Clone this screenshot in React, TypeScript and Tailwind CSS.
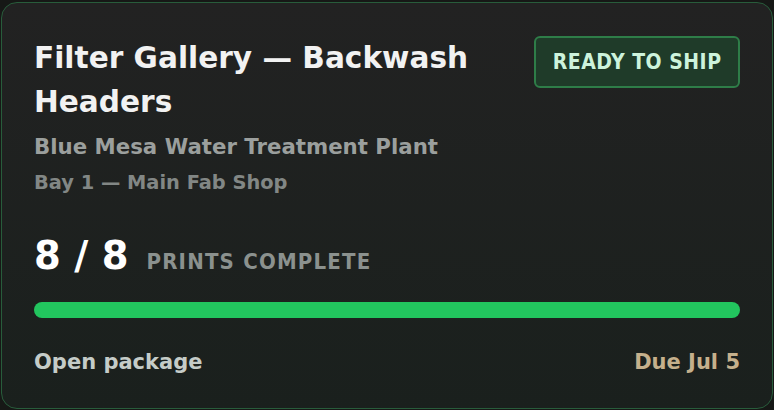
export default function App() {
  return (
    <div
      className="h-[410px] w-[774px] bg-[#161816] px-[1px] pt-[2px] pb-[1px]"
      style={{ fontFamily: '"DejaVu Sans", sans-serif' }}
    >
      <div className="flex h-full flex-col rounded-[16px] border border-[#285c3b] bg-gradient-to-b from-[#222222] to-[#1a201d] pt-[33px] pr-[32px] pb-[31px] pl-[32px]">
        <div className="flex items-start justify-between gap-6">
          <div className="flex flex-col">
            <h1 className="text-[29.6px] leading-[44px] font-bold text-[#f2f2f2]">
              Filter Gallery — Backwash
              <br />
              Headers
            </h1>
            <div className="mt-[8px] text-[21.3px] leading-[30px] font-bold text-[#9b9f9d]">
              Blue Mesa Water Treatment Plant
            </div>
            <div className="mt-[8px] text-[19.4px] leading-[26px] font-bold text-[#828785]">
              Bay 1 — Main Fab Shop
            </div>
          </div>
          <div
            className="rounded-[6px] border-2 border-[#2e7d48] bg-[#1f3b29] px-[16.5px] py-[11px] text-[21px] leading-[26px] font-bold tracking-[0.5px] text-[#cdf3dc]"
            style={{ fontFamily: '"DejaVu Sans Condensed", "DejaVu Sans", sans-serif' }}
          >
            READY TO SHIP
          </div>
        </div>

        <div className="mt-[38px] flex items-baseline gap-[18px]">
          <span className="text-[38.5px] leading-[44px] font-bold text-white">8 / 8</span>
          <span
            className="text-[22px] font-bold tracking-[1.2px] text-[#8b918e]"
            style={{ fontFamily: '"DejaVu Sans Condensed", "DejaVu Sans", sans-serif' }}
          >
            PRINTS COMPLETE
          </span>
        </div>

        <div className="mt-[24px] h-[16px] w-full rounded-full bg-[#22c55e]" />

        <div className="mt-auto flex items-center justify-between text-[21px] leading-[30px] font-bold">
          <span className="text-[#c5ccc8]">Open package</span>
          <span className="text-[#c5b08c]">Due Jul 5</span>
        </div>
      </div>
    </div>
  );
}
